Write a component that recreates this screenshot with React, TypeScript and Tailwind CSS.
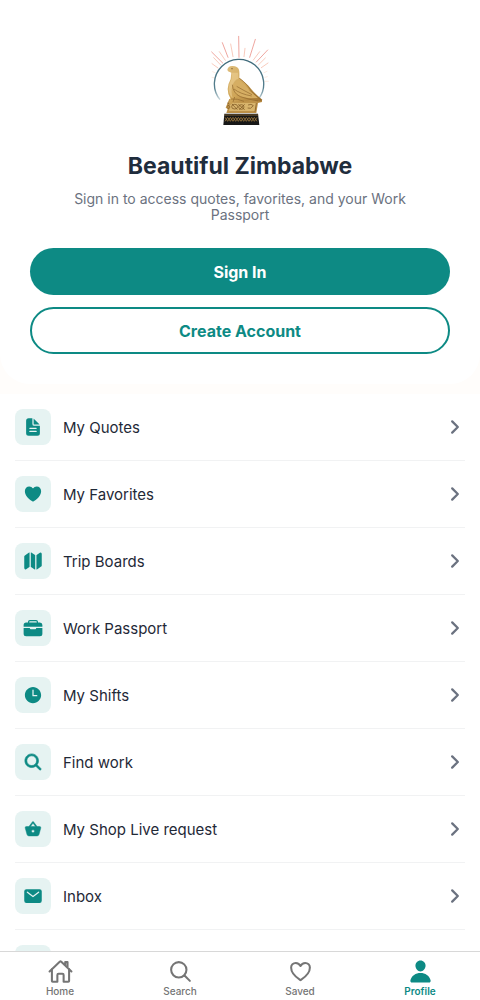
import { ComponentType } from "react";
import {
  IoBasket,
  IoBriefcase,
  IoChevronForward,
  IoDocumentText,
  IoHeart,
  IoHeartOutline,
  IoHomeOutline,
  IoMail,
  IoMap,
  IoPerson,
  IoSearch,
  IoSearchOutline,
  IoTime,
} from "react-icons/io5";

type IconType = ComponentType<{ size?: number; className?: string }>;

const menuItems: { label: string; icon: IconType; iconClass?: string }[] = [
  { label: "My Quotes", icon: IoDocumentText },
  { label: "My Favorites", icon: IoHeart },
  { label: "Trip Boards", icon: IoMap },
  { label: "Work Passport", icon: IoBriefcase },
  { label: "My Shifts", icon: IoTime },
  { label: "Find work", icon: IoSearch, iconClass: "stroke-[16px]" },
  { label: "My Shop Live request", icon: IoBasket, iconClass: "stroke-[12px]" },
  { label: "Inbox", icon: IoMail },
];

const tabs: {
  label: string;
  icon: IconType;
  iconClass?: string;
  active?: boolean;
}[] = [
  { label: "Home", icon: IoHomeOutline, iconClass: "[&_path]:stroke-[42px]" },
  {
    label: "Search",
    icon: IoSearchOutline,
    iconClass: "[&_path]:stroke-[42px]",
  },
  { label: "Saved", icon: IoHeartOutline, iconClass: "[&_path]:stroke-[42px]" },
  { label: "Profile", icon: IoPerson, active: true },
];

const Logo = () => (
  <svg
    viewBox="0 0 240 300"
    className="w-20 h-25"
    role="img"
    aria-label="Beautiful Zimbabwe logo"
  >
    <defs>
      <linearGradient id="gold" x1="0" y1="0" x2="1" y2="1">
        <stop offset="0" stopColor="#dfbe7c" />
        <stop offset="0.5" stopColor="#cfa557" />
        <stop offset="1" stopColor="#9a6c2b" />
      </linearGradient>
      <linearGradient id="ring" x1="0" y1="0" x2="0" y2="1">
        <stop offset="0" stopColor="#3f6a7a" />
        <stop offset="0.7" stopColor="#557f8e" />
        <stop offset="1" stopColor="#c9d7dc" />
      </linearGradient>
    </defs>

    <g stroke="#ea8f86" strokeWidth="2.4" strokeLinecap="round">
      <path d="M35 66 L68 99" />
      <path d="M67 38 L84 82" />
      <path d="M116 19 L117 82" />
      <path d="M166 28 L149 82" />
      <path d="M203 60 L169 96" />
    </g>
    <g stroke="#f6b8a4" strokeWidth="2.2" strokeLinecap="round">
      <path d="M58 65 L76 91" />
      <path d="M92 42 L99 80" />
      <path d="M135 55 L132 80" />
      <path d="M179 65 L160 90" />
      <path d="M41 83 L62 105" />
      <path d="M196 84 L176 104" />
      <path d="M36 101 L54 114" />
      <path d="M204 99 L184 113" />
    </g>
    <g stroke="#fadfd2" strokeWidth="2" strokeLinecap="round">
      <path d="M38 125 L45 128" />
      <path d="M201 124 L192 128" />
      <path d="M36 142 L41 143" />
      <path d="M202 140 L195 142" />
      <path d="M205 154 L195 154" />
    </g>

    <path
      d="M60 209 A74 74 0 1 1 178 204"
      fill="none"
      stroke="url(#ring)"
      strokeWidth="4"
    />

    {/* carved plinth under the bird */}
    <path
      d="M88 207 L176 205 Q187 207 186 216 L174 219 L169 249 L79 249 L83 237 L77 233 L83 218 Z"
      fill="#bd9148"
    />
    <path d="M90 218 L170 219 L165 243 L87 243 Z" fill="#d8b46c" />
    <g fill="none" stroke="#7d5722" strokeWidth="2.2">
      <ellipse cx="104" cy="230" rx="9" ry="7" />
      <ellipse cx="124" cy="231" rx="8" ry="7" />
      <path d="M96 222 L112 239 M115 223 L134 239 M134 223 L118 239" />
      <path d="M144 225 Q154 220 160 227 Q152 239 143 234" />
      <path d="M81 229 q7 -7 9 2 q-1 7 -8 3 M82 219 l10 3 M169 219 l-4 26" />
    </g>

    {/* bird */}
    <path
      d="M82 119 Q84 109 96 108 Q112 107 117 119 Q119 126 118 143 C129 151 143 163 153 176 C162 188 174 198 187 209 Q184 217 174 214 L156 208 L136 214 L103 215 L94 223 L87 221 L91 205 Q83 193 83 177 Q84 161 92 147 L94 128 L84 124 Z"
      fill="url(#gold)"
    />
    <path
      d="M96 128 L95 146 Q86 163 86 178 Q88 197 98 204 Q92 184 97 167 Q103 149 115 146 L114 128 Z"
      fill="#edcf92"
      opacity="0.6"
    />
    <path
      d="M100 173 Q104 152 116 151 Q137 163 148 182 L174 204 L144 204 Q108 202 100 173 Z"
      fill="#d6ae63"
    />
    <g fill="none" stroke="#8a6029" strokeWidth="1.8">
      <path d="M118 145 C137 158 146 171 154 183 C162 193 175 202 184 211" />
      <path d="M97 164 Q99 190 121 200 Q146 208 174 213" />
      <path d="M102 177 Q121 192 155 198" />
      <path d="M110 169 Q130 181 156 194" />
      <path d="M93 207 Q112 205 132 214" />
      <path d="M104 201 L99 216" />
    </g>
    <circle cx="96" cy="116" r="1.8" fill="#6b481c" />

    {/* base */}
    <path d="M73 251 L174 251 L178 285 L70 285 Z" fill="#171717" />
    <g fill="none" stroke="#b58a43" strokeWidth="2">
      <path d="M73 255 H175" />
      <path d="M75 274 L83 262 L91 274 L99 262 L107 274 L115 262 L123 274 L131 262 L139 274 L147 262 L155 274 L163 262 L171 274" />
      <path d="M75 262 L83 274 L91 262 L99 274 L107 262 L115 274 L123 262 L131 274 L139 262 L147 274 L155 262 L163 274 L171 262" />
    </g>
  </svg>
);

const App = () => {
  return (
    <div className="h-screen flex flex-col bg-[#fffdfb] font-['Inter',sans-serif]">
      <main className="flex-1 min-h-0 overflow-y-auto [scrollbar-width:none]">
        <section className="bg-white rounded-b-[30px] p-[30px] flex flex-col items-center">
          <Logo />
          <h1 className="mt-[22px] text-[23px] leading-[29px] font-bold text-[#1f2d3d]">
            Beautiful Zimbabwe
          </h1>
          <p className="mt-[10px] px-5 text-sm leading-4 text-center text-[#6b7280]">
            Sign in to access quotes, favorites, and your Work Passport
          </p>
          <button
            type="button"
            className="mt-[25px] w-full h-[47px] rounded-full bg-[#0d8a84] text-base font-bold text-white"
          >
            Sign In
          </button>
          <button
            type="button"
            className="mt-3 w-full h-[47px] rounded-full border-2 border-[#0d8a84] bg-white text-base font-bold text-[#0d8a84]"
          >
            Create Account
          </button>
        </section>

        <ul className="mt-[10px] px-[15px] bg-white">
          {menuItems.map(({ label, icon: Icon, iconClass }) => (
            <li key={label} className="border-b border-[#f1f2f3]">
              <button
                type="button"
                className="w-full py-[15px] flex items-center gap-3 text-left"
              >
                <span className="size-9 rounded-lg bg-[#e6f3f2] text-[#0d8a84] flex items-center justify-center">
                  <Icon size={20} className={iconClass} />
                </span>
                <span className="flex-1 text-[15px] leading-[21px] text-[#1f2937]">
                  {label}
                </span>
                <IoChevronForward
                  size={20}
                  className="text-[#6b7280] [&_path]:stroke-[58px]"
                />
              </button>
            </li>
          ))}
          <li>
            <button
              type="button"
              aria-label="More"
              className="w-full py-[15px] flex items-center"
            >
              <span className="size-9 rounded-lg bg-[#e6f3f2]" />
            </button>
          </li>
        </ul>
      </main>

      <nav className="border-t border-[#d8d8d8] bg-white grid grid-cols-4 h-[49px]">
        {tabs.map(({ label, icon: Icon, iconClass, active }) => (
          <a
            key={label}
            href="#"
            aria-current={active ? "page" : undefined}
            className={`flex flex-col items-center pt-[7px] text-[10px] leading-3 ${
              active
                ? "text-[#0d8a84] font-semibold"
                : "text-[#757575] font-medium"
            }`}
          >
            <Icon size={25} className={iconClass} />
            <span className="mt-px">{label}</span>
          </a>
        ))}
      </nav>
    </div>
  );
};

export default App;
